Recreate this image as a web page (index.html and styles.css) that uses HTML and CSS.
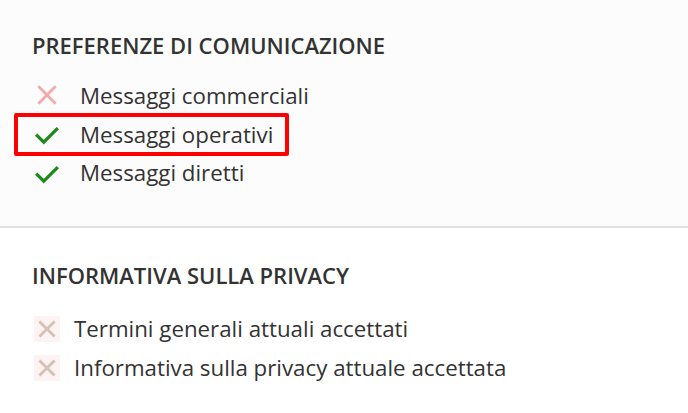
FILE: index.html
```html
<!DOCTYPE html>
<html lang="it">
<head>
  <meta charset="UTF-8">
  <title>Preferenze</title>
  <link rel="stylesheet" href="styles.css">
</head>
<body>
  <section class="panel panel-prefs">
    <h2 class="panel-title">PREFERENZE DI COMUNICAZIONE</h2>
    <ul class="status-list">
      <li class="status-item">
        <svg class="icon icon-no" viewBox="0 0 24 24"><path d="M4 4L20 20M20 4L4 20"/></svg>
        <span>Messaggi commerciali</span>
      </li>
      <li class="status-item highlighted">
        <svg class="icon icon-yes" viewBox="0 0 24 24"><path d="M2 12.5L9 19.5L22 6.5"/></svg>
        <span>Messaggi operativi</span>
      </li>
      <li class="status-item">
        <svg class="icon icon-yes" viewBox="0 0 24 24"><path d="M2 12.5L9 19.5L22 6.5"/></svg>
        <span>Messaggi diretti</span>
      </li>
    </ul>
  </section>
  <section class="panel panel-privacy">
    <h2 class="panel-title">INFORMATIVA SULLA PRIVACY</h2>
    <ul class="status-list compact">
      <li class="status-item">
        <span class="icon-box"><svg class="icon icon-muted" viewBox="0 0 24 24"><path d="M5 5L19 19M19 5L5 19"/></svg></span>
        <span>Termini generali attuali accettati</span>
      </li>
      <li class="status-item">
        <span class="icon-box"><svg class="icon icon-muted" viewBox="0 0 24 24"><path d="M5 5L19 19M19 5L5 19"/></svg></span>
        <span>Informativa sulla privacy attuale accettata</span>
      </li>
    </ul>
  </section>
</body>
</html>
```

FILE: styles.css
```css
:root {
  --text: #333333;
  --green: #1e8a1e;
  --pink: #f3aaaa;
  --tan: #d8c0b4;
  --red: #ff0000;
}

body {
  margin: 0;
  font-family: 'Open Sans', sans-serif;
  color: var(--text);
  background: #ffffff;
}

.panel {
  padding: 30px 32px 0;
}

.panel-prefs {
  background: #fcfcfc;
  height: 196px;
  border-bottom: 2px solid #e2e2e2;
}

.panel-privacy {
  padding-top: 32px;
}

.panel-title {
  margin: 0 0 16px;
  font-size: 22px;
  font-weight: 600;
  line-height: 30px;
}

.panel-privacy .panel-title {
  margin-bottom: 19px;
}

.status-list {
  list-style: none;
  margin: 0;
  padding: 0;
}

.status-item {
  display: flex;
  align-items: center;
  gap: 20px;
  height: 38.5px;
  font-size: 22.3px;
  padding-left: 2px;
}

.highlighted {
  box-sizing: border-box;
  width: 275px;
  height: 43px;
  margin: -2px 0 -2px -18px;
  padding-left: 16px;
  border: 4px solid var(--red);
  border-radius: 2px;
}

.icon {
  width: 26px;
  height: 26px;
  fill: none;
  stroke-width: 2.6;
}

.icon-no {
  stroke: var(--pink);
}

.icon-yes {
  stroke: var(--green);
  stroke-width: 3;
}

.compact .status-item {
  height: 39px;
  gap: 14px;
}

.icon-box {
  display: flex;
  background: #fdf3f3;
}

.icon-muted {
  stroke: var(--tan);
}
```
